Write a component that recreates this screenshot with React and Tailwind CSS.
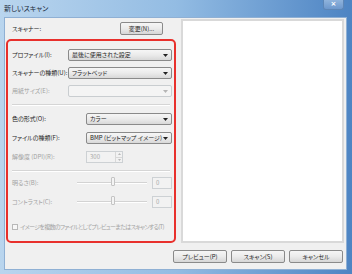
import React from 'react';

const jp = "font-['Noto_Sans_CJK_JP','Noto_Sans',sans-serif] [font-feature-settings:'palt']";

function Combo({ value, width, disabled }) {
    return (
        <div
            className={`flex items-center h-[12px] rounded-[2px] border pl-[3px] pr-[3px] ${width} ${
                disabled
                    ? 'border-[#c9cdd0] bg-[#f4f4f4]'
                    : 'border-[#8a8a8a] bg-linear-to-b from-[#f6f6f6] via-[#ebebeb] to-[#d8d8d8]'
            }`}
        >
            <span className="flex-1 text-[6px] leading-none text-[#1e1e1e] whitespace-nowrap">{value}</span>
            <svg width="5" height="3" viewBox="0 0 5 3">
                <path d="M0 0H5L2.5 3Z" fill={disabled ? '#b5b5b5' : '#222'} />
            </svg>
        </div>
    );
}

function Button({ children, width }) {
    return (
        <div
            className={`flex items-center justify-center h-[13px] rounded-[2px] border border-[#8a8a8a] bg-linear-to-b from-[#f6f6f6] via-[#ebebeb] to-[#d6d6d6] text-[6px] leading-none text-[#1e1e1e] ${width}`}
        >
            {children}
        </div>
    );
}

function Label({ children, width = '', disabled, extra = '' }) {
    return (
        <span className={`inline-block text-[6px] leading-none whitespace-nowrap ${width} ${extra} ${disabled ? 'text-[#a3a3a3]' : 'text-[#1e1e1e]'}`}>
            {children}
        </span>
    );
}

function Separator() {
    return (
        <div className="ml-[4px] mr-[4px] h-[2px] border-t border-[#d5d5d5] border-b border-b-white" />
    );
}

function SliderRow({ label, mt }) {
    return (
        <div className={`flex items-center h-[12px] ${mt} pl-[4px]`}>
            <Label width="w-[65px]" disabled>{label}</Label>
            <div className="relative w-[70px] h-[12px] flex items-center">
                <div className="w-full h-[2px] border-t border-[#d3d3d3] border-b border-b-white" />
                <div className="absolute left-[34px] top-[0px] w-[4px] h-[9px] rounded-[1px] border border-[#c4c4c4] bg-[#f4f4f4]" />
            </div>
            <div className="ml-[5px] w-[20px] h-[12px] border border-[#cdd1d4] bg-[#f2f2f2] flex items-center pl-[3px] text-[6px] leading-none text-[#a8a8a8]">
                0
            </div>
        </div>
    );
}

export default function App() {
    return (
        <div className={`w-[352px] h-[274px] flex flex-col bg-linear-to-r from-[#b9d5ee] via-[#93bce3] to-[#4d84c3] ${jp}`}>
            {/* barra de título */}
            <div className="relative h-[17px] flex items-center pl-[4px]">
                <span className="text-[7px] leading-none text-[#1b2a3a]">新しいスキャン</span>
                <div className="absolute right-[8px] top-0 w-[21px] h-[10px] rounded-b-[3px] border border-t-0 border-[#5d86b6] bg-linear-to-b from-[#8fb3dc] to-[#6d98cd] flex items-center justify-center">
                    <span className="text-[7px] leading-none font-bold text-white font-['DejaVu_Sans',sans-serif]">×</span>
                </div>
            </div>

            {/* área de cliente */}
            <div className="ml-[4px] mr-[5px] mb-[4px] flex-1 bg-[#f0f0f0] border border-[#8fb0d4] flex flex-col">
                <div className="flex h-[225px]">
                    {/* columna izquierda */}
                    <div className="w-[176px] flex flex-col">
                        <div className="flex items-center h-[11px] mt-[5px] pl-[7px]">
                            <Label width="w-[108px]">スキャナー:</Label>
                            <Button width="w-[43px] h-[11px]">変更(N)...</Button>
                        </div>

                        <div className="ml-[1px] mt-[5px] w-[170px] h-[204px] border-2 border-[#e8302c] rounded-[5px] flex flex-col">
                            <div className="flex items-center h-[12px] mt-[8px] pl-[4px]">
                                <Label width="w-[56px]">プロファイル(I):</Label>
                                <Combo value="最後に使用された設定" width="w-[104px]" />
                            </div>
                            <div className="flex items-center h-[12px] mt-[6px] pl-[4px]">
                                <Label width="w-[56px]">スキャナーの種類(U):</Label>
                                <Combo value="フラットベッド" width="w-[104px]" />
                            </div>
                            <div className="flex items-center h-[12px] mt-[6px] pl-[4px]">
                                <Label width="w-[56px]" disabled>用紙サイズ(E):</Label>
                                <Combo value="" width="w-[104px]" disabled />
                            </div>

                            <div className="mt-[7px]">
                                <Separator />
                            </div>

                            <div className="flex items-center h-[12px] mt-[7px] pl-[4px]">
                                <Label width="w-[74px]">色の形式(O):</Label>
                                <Combo value="カラー" width="w-[86px]" />
                            </div>
                            <div className="flex items-center h-[12px] mt-[7px] pl-[4px]">
                                <Label width="w-[74px]">ファイルの種類(F):</Label>
                                <Combo value="BMP (ビットマップ イメージ)" width="w-[86px]" />
                            </div>
                            <div className="flex items-center h-[12px] mt-[7px] pl-[4px]">
                                <Label width="w-[74px]" disabled>解像度 (DPI)(R):</Label>
                                <div className="flex w-[37px] h-[12px] border border-[#cdd1d4] bg-[#f2f2f2]">
                                    <span className="flex-1 flex items-center pl-[3px] text-[6px] leading-none text-[#a8a8a8]">300</span>
                                    <div className="w-[7px] flex flex-col border-l border-[#d8d8d8]">
                                        <div className="flex-1 flex items-center justify-center border-b border-[#d8d8d8]">
                                            <svg width="3" height="2" viewBox="0 0 3 2"><path d="M0 2H3L1.5 0Z" fill="#b8b8b8" /></svg>
                                        </div>
                                        <div className="flex-1 flex items-center justify-center">
                                            <svg width="3" height="2" viewBox="0 0 3 2"><path d="M0 0H3L1.5 2Z" fill="#b8b8b8" /></svg>
                                        </div>
                                    </div>
                                </div>
                            </div>

                            <div className="mt-[7px]">
                                <Separator />
                            </div>

                            <SliderRow label="明るさ(B):" mt="mt-[5px]" />
                            <SliderRow label="コントラスト(C):" mt="mt-[7px]" />

                            <div className="flex items-center h-[8px] mt-[15px] pl-[4px] gap-[2px]">
                                <div className="w-[6px] h-[6px] border border-[#b8b8b8] bg-[#f7f7f7]" />
                                <Label disabled extra="tracking-[-0.7px]">イメージを複数のファイルとしてプレビューまたはスキャンする(T)</Label>
                            </div>
                        </div>
                    </div>

                    {/* vista previa */}
                    <div className="mt-[1px] w-[163px] h-[224px] border-2 border-[#d9d9d9] bg-white" />
                </div>

                {/* botones */}
                <div className="flex justify-end gap-[4px] mt-[7px] pr-[3px]">
                    <Button width="w-[54px]">プレビュー(P)</Button>
                    <Button width="w-[54px]">スキャン(S)</Button>
                    <Button width="w-[54px]">キャンセル</Button>
                </div>
            </div>
        </div>
    );
}
